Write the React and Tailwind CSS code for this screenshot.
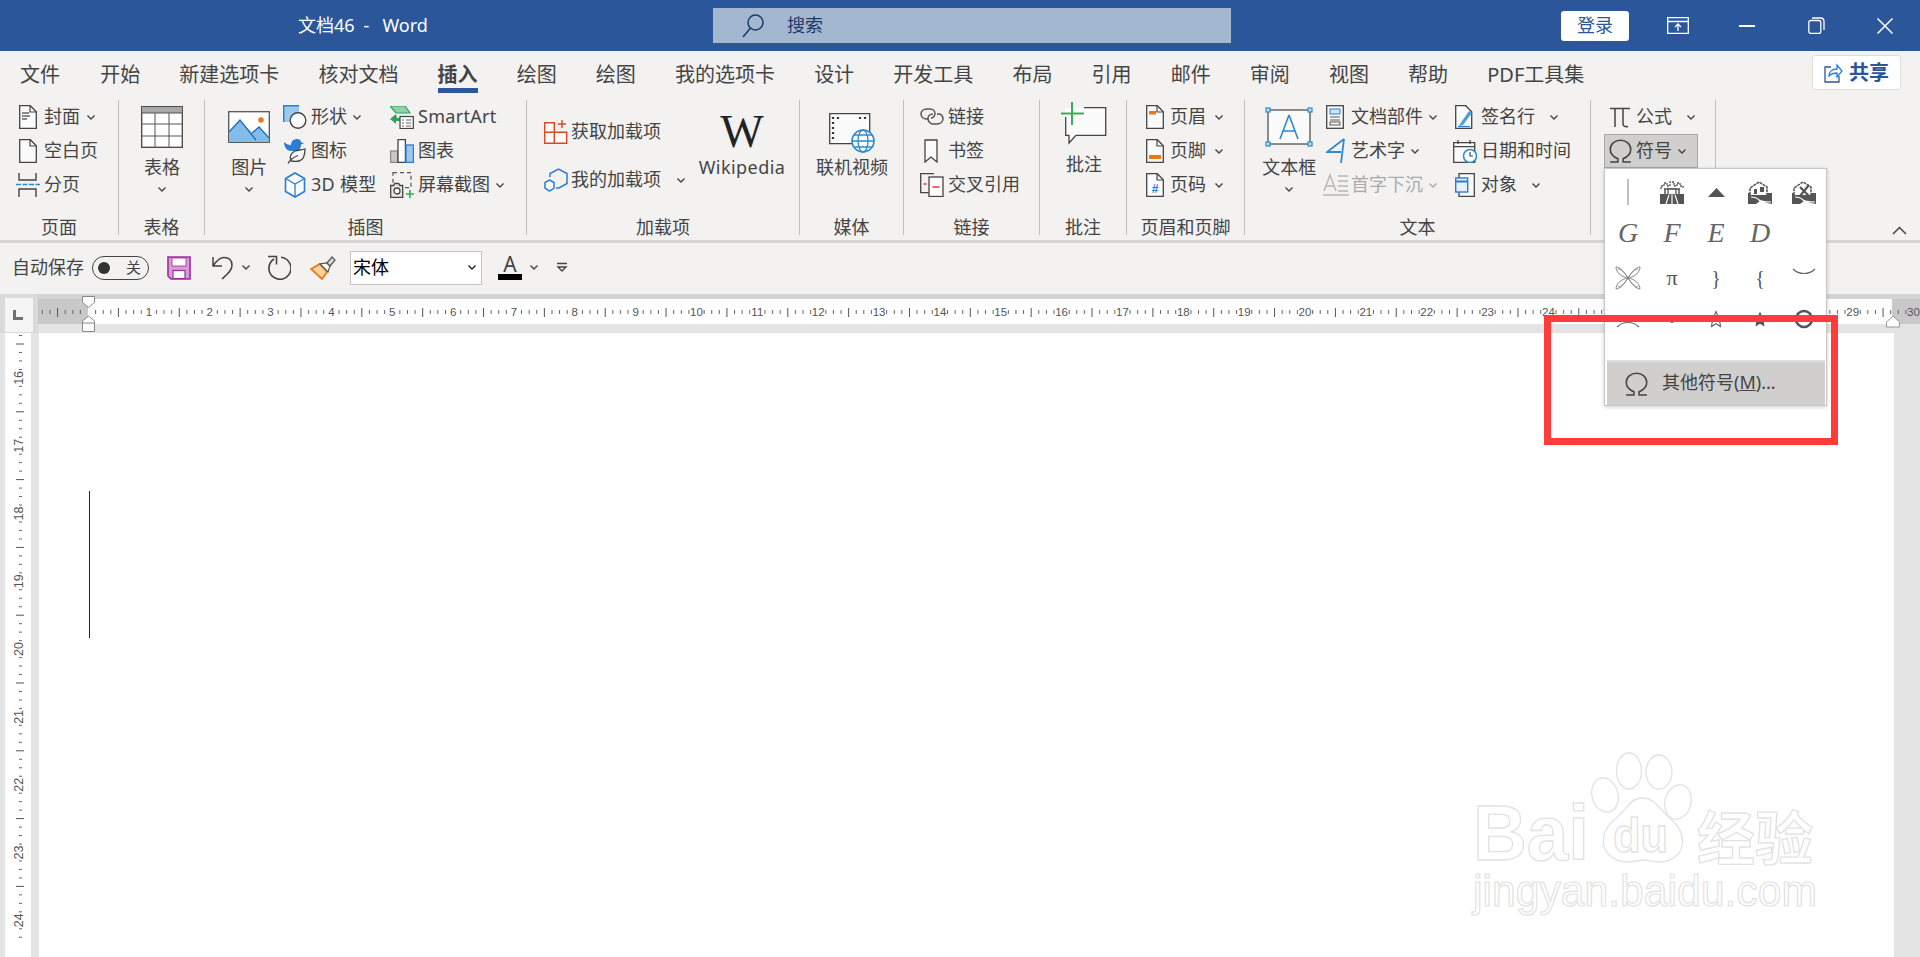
import React from "react";

const Chev = ({ c = "#444", className = "" }) => (
  <svg width="10" height="7" viewBox="0 0 10 7" className={"shrink-0 " + className}>
    <path d="M1.500 1.500 5 5l3.500-3.500" fill="none" stroke={c} strokeWidth="1.400" />
  </svg>
);
const Doc = ({ children, w = 18, h = 24 }) => (
  <svg width={w} height={h} viewBox="0 0 18 24">
    <path d="M.7.700h10.600l6 6v16.600H.7z" fill="#fbfbfb" stroke="#444" strokeWidth="1.300" />
    <path d="M11 .7v6.300h6.300" fill="none" stroke="#444" strokeWidth="1.200" />
    {children}
  </svg>
);
const ItemC = ({ icon, iw = 28, label, cm, cc, color = "", track = "" }) => (
  <div className={"flex items-center h-[34px] whitespace-nowrap " + color}>
    <div className="flex items-center shrink-0" style={{ width: iw }}>{icon}</div>
    <span className={"pb-[2px] " + track}>{label}</span>
    {cm !== undefined && <div className="flex" style={{ marginLeft: cm }}><Chev c={cc} /></div>}
  </div>
);
const Big = ({ icon, label, w = 60, chev, ic = "", track = "" }) => (
  <div className="flex flex-col items-center shrink-0" style={{ width: w }}>
    <div className={"h-[54px] flex items-center justify-center " + ic}>{icon}</div>
    <div className={"h-[26px] leading-[26px] whitespace-nowrap " + track}>{label}</div>
    {chev && <div className="h-[18px] flex items-center"><Chev /></div>}
  </div>
);
const Group = ({ w, label, children, pl = 0 }) => (
  <div className="flex flex-col h-[135px] border-r border-[#c0c0c0] shrink-0 relative" style={{ width: w }}>
    <div className="flex h-[102px]" style={{ paddingLeft: pl }}>{children}</div>
    {label && <div className="mt-auto mb-[1px] h-[14px] leading-[14px] text-center whitespace-nowrap">{label}</div>}
  </div>
);

const Ic = {
  cover: <Doc><path d="M3 8h7M3 11h8M3 14h5" stroke="#666" strokeWidth="1.300" /></Doc>,
  blank: <Doc />,
  brk: (
    <svg width="24" height="24" viewBox="0 0 24 24" className="-ml-[3px]">
      <path d="M3 0v7h17V0M3 24v-8h17v8" fill="none" stroke="#444" strokeWidth="1.400" />
      <path d="M0 11.500h24" stroke="#2b8ad3" strokeWidth="1.500" strokeDasharray="5 1.500" />
    </svg>
  ),
  table: (
    <svg width="42" height="42" viewBox="0 0 42 42">
      <rect x=".7" y=".7" width="40.600" height="40.600" fill="#fff" stroke="#444" strokeWidth="1.300" />
      <rect x="1" y="1" width="40" height="6" fill="#a8a8a8" />
      <path d="M14 7v34M28 7v34M1 7h40M1 18h40M1 30h40" stroke="#555" strokeWidth="1" fill="none" />
    </svg>
  ),
  pic: (
    <svg width="42" height="32" viewBox="0 0 42 32">
      <rect x=".7" y=".7" width="40.600" height="30.600" fill="#fff" stroke="#555" strokeWidth="1.300" />
      <path d="M1 31V21L12 9l12 13 7-6 10 11v4z" fill="#83bcea" />
      <path d="M1 21L12 9l16 20M24 22l7-6 10 11" fill="none" stroke="#1e6fb5" strokeWidth="1.300" />
      <circle cx="33" cy="9" r="2.800" fill="#e8791c" />
    </svg>
  ),
  shape: (
    <svg width="24" height="24" viewBox="0 0 24 24">
      <rect x=".7" y=".7" width="15.300" height="16.300" fill="#9cc8ee" />
      <path d="M.7 17V.7H16" fill="none" stroke="#2b7cd3" strokeWidth="1.400" />
      <circle cx="15" cy="15.500" r="7.800" fill="#fbfbfb" stroke="#444" strokeWidth="1.400" />
    </svg>
  ),
  icons: (
    <svg width="24" height="26" viewBox="0 0 24 26" className="-mt-[1px]">
      <path d="M1 4c2 2 4 3 7 3 0-4 3-6 6-6 2 0 4 1 4 3l3 1.500-3 1c0 3-1 5-3 6.500H8C4 13 1 9 1 4z" fill="#2b7cd3" />
      <path d="M8 23c-2-4 0-8 4-10 3-1 7-1 10-2 0 7-2 11-6 12-2 .5-5 .500-8 0zM5 25.500c2-4 5-6 10-8" fill="#fbfbfb" stroke="#444" strokeWidth="1.300" />
    </svg>
  ),
  cube: (
    <svg width="22" height="26" viewBox="0 0 22 26" className="ml-[1px]">
      <path d="M11 1l9.500 5.500v13L11 25 1.500 19.500v-13z" fill="#fbfbfb" stroke="#2b7cd3" strokeWidth="1.600" />
      <path d="M1.500 6.500L11 12l9.500-5.500M11 12v13" fill="none" stroke="#2b7cd3" strokeWidth="1.300" />
    </svg>
  ),
  smart: (
    <svg width="24" height="23" viewBox="0 0 24 23">
      <path d="M0 0h15l5 7H6z" fill="#8fd1a6" stroke="#2ea55a" strokeWidth="1.200" />
      <path d="M0 13l6-5 1 4h6v3H6v3z" fill="#2ea55a" />
      <rect x="10" y="10.500" width="13.300" height="12" fill="#fbfbfb" stroke="#444" strokeWidth="1.200" />
      <path d="M12 14h2M16 14h5M12 17h2M16 17h5M12 20h2M16 20h5" stroke="#666" />
    </svg>
  ),
  chart: (
    <svg width="24" height="24" viewBox="0 0 24 24">
      <rect x=".6" y="12" width="7" height="11.400" fill="#c8c8c8" stroke="#888" strokeWidth="1.200" />
      <rect x="8" y=".6" width="7.400" height="22.800" fill="#fff" stroke="#444" strokeWidth="1.300" />
      <rect x="16" y="6" width="7.400" height="17.400" fill="#9cc8ee" stroke="#2b7cd3" strokeWidth="1.300" />
    </svg>
  ),
  shot: (
    <svg width="24" height="26" viewBox="0 0 24 26">
      <rect x="3" y=".7" width="18" height="15" fill="none" stroke="#555" strokeWidth="1.200" strokeDasharray="4 3" />
      <path d="M.7 13.500h3l1-2h4l1 2h3v11.800H.7z" fill="#e8e8e8" stroke="#444" strokeWidth="1.300" />
      <circle cx="7" cy="19" r="3" fill="#fff" stroke="#444" strokeWidth="1.300" />
      <path d="M20 18v8M16 22h8" stroke="#34a853" strokeWidth="1.600" />
    </svg>
  ),
  get: (
    <svg width="24" height="24" viewBox="0 0 24 24">
      <path d="M.7 2.700h9.600v9.600H.7zM.7 12.300h9.600v11H.7zM10.300 12.300h12.400v11H10.300z" fill="#fbfbfb" stroke="#d8491f" strokeWidth="1.400" />
      <path d="M18 0v8M14 4h8" stroke="#d8491f" strokeWidth="1.400" />
    </svg>
  ),
  mine: (
    <svg width="24" height="24" viewBox="0 0 24 24">
      <path d="M6 9V5.500L14.500 1 23 5.500v10L15 20h-3" fill="none" stroke="#2b7cd3" strokeWidth="1.500" />
      <path d="M5.500 12l4.500 2.500v5.500L5.500 23 1 20v-5.500z" fill="#fbfbfb" stroke="#2b7cd3" strokeWidth="1.500" />
    </svg>
  ),
  video: (
    <svg width="46" height="40" viewBox="0 0 46 40">
      <path d="M.7.700h40v30H.7z" fill="#fbfbfb" stroke="#444" strokeWidth="1.300" />
      <path d="M4 4v2M4 9v2M4 14v2M4 19v2M4 24v2M9 4v2M31 4v2M36 4v2" stroke="#333" strokeWidth="2.200" />
      <circle cx="34" cy="28" r="11" fill="#fff" stroke="#2b8ad3" strokeWidth="1.600" />
      <ellipse cx="34" cy="28" rx="5" ry="11" fill="none" stroke="#2b8ad3" strokeWidth="1.300" />
      <path d="M23 28h22M25 22h18M25 34h18" stroke="#2b8ad3" strokeWidth="1.300" />
    </svg>
  ),
  link: (
    <svg width="24" height="18" viewBox="0 0 24 18">
      <path d="M8 11H7C3 11 1 8.500 1 6s2-5 6-5h3c3 0 5 2 5 4.500S13 10 11 10" fill="none" stroke="#555" strokeWidth="1.500" />
      <path d="M13 5c-3 0-5 2-5 4.500S10 15 13 15h3c4 0 7-2 7-5s-2-5-5-5h-1" fill="none" stroke="#555" strokeWidth="1.500" transform="translate(0 1)" />
    </svg>
  ),
  mark: (
    <svg width="14" height="24" viewBox="0 0 14 24" className="ml-[4px]">
      <path d="M1 1h12v22l-6-5-6 5z" fill="#fbfbfb" stroke="#444" strokeWidth="1.300" />
    </svg>
  ),
  xref: (
    <svg width="24" height="24" viewBox="0 0 24 24">
      <path d="M14 .7H.7v19h8" fill="none" stroke="#444" strokeWidth="1.300" />
      <rect x="9" y="4" width="14" height="19.500" fill="#fbfbfb" stroke="#444" strokeWidth="1.300" />
      <path d="M3.500 11h3M12.500 14h7" stroke="#e33" strokeWidth="1.600" />
    </svg>
  ),
  comment: (
    <svg width="46" height="44" viewBox="0 0 46 44">
      <path d="M4.700 5.700h40v27.600H15L8 41v-7.700H4.700z" fill="#fbfbfb" />
      <path d="M23 5.700h21.700v27.600H15L8 41v-7.700H4.700V15" fill="none" stroke="#444" strokeWidth="1.300" />
      <path d="M11 0v23M0 11.500h23" stroke="#3eaa5e" strokeWidth="2" />
    </svg>
  ),
  hd: <Doc><rect x="3" y="6" width="7" height="3.500" fill="#e8791c" /></Doc>,
  ft: <Doc><rect x="3" y="16" width="12" height="4" fill="#e8791c" /></Doc>,
  pg: <Doc><text x="9" y="20" textAnchor="middle" fontSize="12" fontWeight="700" fontFamily="Liberation Sans" fill="#2b7cd3">#</text></Doc>,
  tbox: (
    <svg width="48" height="40" viewBox="0 0 48 40">
      <rect x="3" y="3" width="42" height="34" fill="#fbfbfb" stroke="#444" strokeWidth="1.200" />
      <path d="M24 8l-9 24M24 8l9 24M18 24h12" stroke="#2b8ad3" strokeWidth="1.600" fill="none" />
      {[[3, 3], [45, 3], [3, 37], [45, 37]].map(([x, y]) => (
        <rect key={x + "-" + y} x={x - 2} y={y - 2} width="4" height="4" fill="#bfe0f7" stroke="#2b8ad3" strokeWidth="1.200" />
      ))}
    </svg>
  ),
  parts: (
    <svg width="18" height="24" viewBox="0 0 18 24" className="ml-[3px]">
      <rect x=".7" y=".7" width="16.600" height="22.600" fill="#fbfbfb" stroke="#444" strokeWidth="1.300" />
      <rect x="4" y="4" width="10" height="5" fill="#cfe4f7" stroke="#2b7cd3" />
      <path d="M4 12h10M4 15h10" stroke="#555" strokeWidth="1.200" />
      <rect x="4" y="17" width="10" height="3" fill="none" stroke="#555" />
    </svg>
  ),
  wa: (
    <svg width="20" height="26" viewBox="0 0 20 26" className="ml-[3px]">
      <path d="M18 1L1 14h14M18 1l-3 24" fill="none" stroke="#2b8ad3" strokeWidth="1.800" />
    </svg>
  ),
  drop: (
    <svg width="26" height="24" viewBox="0 0 26 24">
      <path d="M1 18L7 2l6 16M3 13h8M0 22h26M15 3h10M15 8h10M15 13h10M15 18h10" fill="none" stroke="#b5b5b5" strokeWidth="1.400" />
    </svg>
  ),
  sign: (
    <svg width="19" height="24" viewBox="0 0 19 24">
      <path d="M.7.700h10l6 6v16.600H.7z" fill="#fbfbfb" stroke="#444" strokeWidth="1.300" />
      <path d="M5 19L14 6l3 2-9 12-4 1z" fill="#4a9fe0" />
      <path d="M3 21.500h12" stroke="#2b7cd3" strokeWidth="1.200" />
    </svg>
  ),
  date: (
    <svg width="24" height="24" viewBox="0 0 24 24" className="-ml-[2px]">
      <path d="M.7 3.700h21v19.600H.7z" fill="#fbfbfb" stroke="#444" strokeWidth="1.300" />
      <path d="M1 7.700h21M5 1v4M17 1v4" stroke="#444" strokeWidth="1.300" />
      <circle cx="17" cy="17" r="6.500" fill="#fff" stroke="#2b8ad3" strokeWidth="1.500" />
      <path d="M17 13v4h3" fill="none" stroke="#444" strokeWidth="1.200" />
    </svg>
  ),
  obj: (
    <svg width="20" height="24" viewBox="0 0 20 24">
      <path d="M4 .7h15.300v22.600H4z" fill="#fbfbfb" stroke="#444" strokeWidth="1.300" />
      <rect x=".7" y="5" width="12" height="14" fill="#e6f1fb" stroke="#2b7cd3" strokeWidth="1.400" />
      <path d="M1 8.500h11" stroke="#2b7cd3" strokeWidth="2" />
    </svg>
  ),
  pi: (
    <svg width="22" height="21" viewBox="0 0 22 21">
      <path d="M1 1.500h20M6 1.500V20M14 1.500V17c0 2 2 3 5 2.500" fill="none" stroke="#444" strokeWidth="1.500" />
    </svg>
  ),
};
const Omega = () => (
  <svg width="23" height="24" viewBox="0 0 22 23">
    <path d="M1 22h7.500v-3C4 17 1.200 14 1.200 10 1.200 5 5.500 1.200 11 1.200S20.800 5 20.800 10c0 4-2.800 7-7.300 9v3H21" fill="none" stroke="#444" strokeWidth="1.500" />
  </svg>
);

const tabs = ["文件", "开始", "新建选项卡", "核对文档", "插入", "绘图", "绘图", "我的选项卡", "设计", "开发工具", "布局", "引用", "邮件", "审阅", "视图", "帮助", "PDF工具集"];

const cm = 60.85;
const HRuler = () => {
  const t = [];
  for (let i = -7; i <= 244; i++) {
    const x = 50 + (i * cm) / 8;
    if (x < 2 || x > 1880) continue;
    const m = ((i % 8) + 8) % 8;
    if (m === 0) {
      if (i !== 0) t.push(<text key={i} x={x} y="18" textAnchor="middle" dominantBaseline="central" fontSize="11.500" fontFamily="Liberation Sans" fill="#555">{i / 8}</text>);
    } else if (m === 4) {
      t.push(<path key={i} d={`M${x} 14v9`} stroke="#555" strokeWidth="1" />);
    } else {
      t.push(<path key={i} d={`M${x} 16v4`} stroke="#666" strokeWidth="1" />);
    }
  }
  return (
    <svg width="1882" height="39" viewBox="0 0 1882 39" className="absolute left-0 top-0">
      {t}
      <path d="M44.500 2.500h12v6l-6 5-6-5z" fill="#fff" stroke="#888" />
      <path d="M50.500 22l6 5v10.500h-12V27z" fill="#fff" stroke="#888" />
      <path d="M44.500 29h12" stroke="#888" />
      <path d="M1855 22l6.500 6v5h-13v-5z" fill="#fff" stroke="#999" />
    </svg>
  );
};
const VRuler = () => {
  const t = [];
  for (let i = -1; i < 72; i++) {
    const y = 11 + (i * 67.8) / 8;
    if (y > 612) continue;
    const m = ((i % 8) + 8) % 8;
    if (m === 4) {
      const c = 16 + (i - 4) / 8;
      t.push(<text key={i} x="14" y={y} textAnchor="middle" dominantBaseline="central" fontSize="12.500" fontFamily="Liberation Sans" fill="#555" transform={`rotate(-90 14 ${y})`}>{c}</text>);
    } else if (m === 0) {
      t.push(<path key={i} d={`M11 ${y}h8`} stroke="#555" strokeWidth="1" />);
    } else {
      t.push(<path key={i} d={`M14 ${y}h3`} stroke="#666" strokeWidth="1" />);
    }
  }
  return (
    <svg width="26" height="624" viewBox="0 0 26 624" className="absolute left-0 top-0">{t}</svg>
  );
};

const Castle = () => (
  <svg width="24" height="23" viewBox="0 0 24 23">
    <path d="M0 13h24v10H0z" fill="#555" />
    <path d="M1 8V5h3V2h3v3h3V1h4v4h3V2h3v3h3v3" fill="none" stroke="#555" strokeWidth="1.300" strokeDasharray="2 1" />
    <path d="M4 8h16M5 8v6M19 8v6" stroke="#555" strokeWidth="1.500" fill="none" />
    <path d="M8 8h8v6H8z" fill="#fff" stroke="#555" strokeWidth="1.300" />
    <path d="M9 14L6 23M15 14l3 9M12 14v9" stroke="#fff" strokeWidth="1.200" />
  </svg>
);
const House = ({ cross }) => (
  <svg width="24" height="23" viewBox="0 0 24 23">
    <path d="M2 14V7l9-6 8 5v8" fill="#fff" stroke="#555" strokeWidth="1.500" strokeDasharray="3 .7" />
    <path d="M0 23V12h2v2h17v-2h5v11l-5-1-7-2-4 3z" fill="#555" />
    <path d="M3 16c3 0 6 1 8 3s6 2 12 2" fill="none" stroke="#fff" strokeWidth="1.200" />
    {cross ? <path d="M8 6l9 9M17 4L8 15" stroke="#555" strokeWidth="2.200" /> : <path d="M6 8h3v5H6zM12 6h4v5h-4z" fill="#555" />}
  </svg>
);
const Sym = ({ children, cls = "" }) => (
  <div className={"w-[44px] h-full flex items-center justify-center leading-none overflow-visible " + cls}>{children}</div>
);
const Script = ({ c }) => (
  <span className="[font-family:'Liberation_Serif',serif] italic text-[28px] text-[#666]">{c}</span>
);
const Star = ({ fill }) => (
  <svg width="18" height="18" viewBox="0 0 24 24" className="-mt-[6px]">
    <path d="M12 2l3 7 7 .8-5.200 4.800L18 22l-6-3.800L6 22l1.200-7.400L2 9.800 9 9z" fill={fill ? "#555" : "none"} stroke={fill ? "none" : "#666"} strokeWidth="1.500" />
  </svg>
);

export default function App() {
  return (
    <div className="relative w-[1920px] h-[957px] overflow-hidden flex flex-col bg-white text-[18px] text-[#444] [font-family:'Noto_Sans','Noto_Sans_CJK_SC',sans-serif]">
      {/* Title bar */}
      <div className="h-[51px] bg-[#2b579a] flex items-center shrink-0">
        <div className="w-[713px] pl-[298px] text-white whitespace-nowrap text-[18px] flex">
          <span>文档46</span>
          <span className="ml-[9px]">-</span>
          <span className="ml-[13px]">Word</span>
        </div>
        <div className="w-[518px] h-[35px] bg-[#a4b7d0] flex items-center pl-[29px] text-[#1d3a6b]">
          <svg width="22" height="24" viewBox="0 0 22 24">
            <circle cx="13.500" cy="8.500" r="7.500" fill="none" stroke="#1d3a6b" strokeWidth="1.500" />
            <path d="M8.500 14L1 23" stroke="#1d3a6b" strokeWidth="1.600" />
          </svg>
          <span className="ml-[23px]">搜索</span>
        </div>
        <div className="ml-[330px] w-[68px] h-[30px] bg-white rounded-[3px] flex items-center justify-center text-[#2b579a]">登录</div>
        <svg width="22" height="17" viewBox="0 0 22 17" className="ml-[38px]">
          <path d="M.7.700h20.600v15.600H.7zM1 4.500h20M11 14V7M8 10l3-3 3 3" fill="none" stroke="#fff" strokeWidth="1.300" />
        </svg>
        <div className="ml-[50px] w-[16px] h-[2px] bg-white" />
        <svg width="17" height="17" viewBox="0 0 17 17" className="ml-[53px]">
          <rect x=".8" y="3.500" width="12" height="13" rx="2" fill="none" stroke="#fff" strokeWidth="1.300" />
          <path d="M4 1h8.500c2 0 3.500 1.500 3.500 3.500V13" fill="none" stroke="#fff" strokeWidth="1.300" />
        </svg>
        <svg width="16" height="16" viewBox="0 0 16 16" className="ml-[52px]">
          <path d="M.5.500l15 15M15.500.500l-15 15" stroke="#fff" strokeWidth="1.500" />
        </svg>
      </div>

      {/* Tabs */}
      <div className="h-[49px] bg-[#f3f2f1] shrink-0 flex items-start pl-[20px] gap-[39.150px] text-[20px] relative">
        {tabs.map((t, i) => (
          <div key={i} className={"h-[42px] pt-[8.500px] leading-[30px] whitespace-nowrap border-b-[5px] " + (i === 4 ? "border-[#2b579a] font-bold" : i === 0 ? "border-transparent mr-[1px]" : "border-transparent")}>{t}</div>
        ))}
        <div className="ml-auto mr-[19px] mt-[4px] w-[89px] h-[35px] bg-white border border-[#e1dfdd] rounded-[3px] flex items-center pl-[11px] text-[#2b579a] font-bold">
          <svg width="19" height="20" viewBox="0 0 19 20" className="mr-[6px]">
            <path d="M7 4H1v15h14v-6" fill="none" stroke="#2b579a" strokeWidth="1.300" />
            <path d="M5 13c0-4 3-7 8-7V2l5 6-5 6v-4c-3 0-6 1-8 3z" fill="none" stroke="#2b7cd3" strokeWidth="1.300" />
          </svg>
          共享
        </div>
      </div>

      {/* Ribbon */}
      <div className="h-[143px] bg-[#f3f2f1] shrink-0 flex items-start border-b-[3px] border-[#d6d6d6]">
        <Group w={119} label="页面" pl={19}>
          <div>
            <ItemC iw={25} icon={Ic.cover} label="封面" cm={6} />
            <ItemC iw={25} icon={Ic.blank} label="空白页" />
            <ItemC iw={25} icon={Ic.brk} label="分页" />
          </div>
        </Group>
        <Group w={86} label="表格" pl={12}>
          <Big w={62} icon={Ic.table} label="表格" chev />
        </Group>
        <Group w={322} label="插图" pl={10.500}>
          <Big w={67.500} icon={Ic.pic} label="图片" chev />
          <div className="w-[107px]">
            <ItemC icon={Ic.shape} label="形状" cm={5} />
            <ItemC icon={Ic.icons} label="图标" />
            <ItemC icon={Ic.cube} label="3D 模型" track="tracking-[0.3px]" />
          </div>
          <div>
            <ItemC icon={Ic.smart} label="SmartArt" track="tracking-[0.3px]" />
            <ItemC icon={Ic.chart} label="图表" />
            <ItemC icon={Ic.shot} label="屏幕截图" cm={5} />
          </div>
        </Group>
        <Group w={273} label="加载项" pl={17}>
          <div className="w-[153px] pt-[15px] flex flex-col gap-[14px]">
            <ItemC iw={27} icon={Ic.get} label="获取加载项" />
            <ItemC iw={27} icon={Ic.mine} label="我的加载项" cm={15} />
          </div>
          <Big w={90} ic="pt-[10px]" track="tracking-[0.45px]" icon={<span className="[font-family:'Liberation_Serif',serif] text-[46px] leading-none text-[#222]">W</span>} label="Wikipedia" />
        </Group>
        <Group w={104} label="媒体" pl={16}>
          <Big w={72} ic="pt-[12px]" icon={Ic.video} label="联机视频" />
        </Group>
        <Group w={136} label="链接" pl={16}>
          <div>
            <ItemC icon={Ic.link} label="链接" />
            <ItemC icon={Ic.mark} label="书签" />
            <ItemC icon={Ic.xref} label="交叉引用" />
          </div>
        </Group>
        <Group w={87} label="批注" pl={14}>
          <Big w={60} ic="-mt-[3px]" icon={Ic.comment} label="批注" />
        </Group>
        <Group w={118} label="页眉和页脚" pl={19}>
          <div>
            <ItemC iw={24} icon={Ic.hd} label="页眉" cm={8} />
            <ItemC iw={24} icon={Ic.ft} label="页脚" cm={8} />
            <ItemC iw={24} icon={Ic.pg} label="页码" cm={8} />
          </div>
        </Group>
        <Group w={346} label="文本" pl={10.500}>
          <Big w={67.500} icon={Ic.tbox} label="文本框" chev />
          <div className="w-[132px]">
            <ItemC icon={Ic.parts} label="文档部件" cm={5} />
            <ItemC icon={Ic.wa} label="艺术字" cm={5} />
            <ItemC icon={Ic.drop} label="首字下沉" cm={5} cc="#aaa" color="text-[#aaa]" />
          </div>
          <div>
            <ItemC iw={26} icon={Ic.sign} label="签名行" cm={14} />
            <ItemC iw={26} icon={Ic.date} label="日期和时间" />
            <ItemC iw={26} icon={Ic.obj} label="对象" cm={14} />
          </div>
        </Group>
        <Group w={125} pl={13}>
          <div>
            <div className="pl-[5px]"><ItemC iw={27} icon={Ic.pi} label="公式" cm={14} /></div>
            <div className="w-[94px] h-[34px] bg-[#d0cfcd] border border-[#a8a8a8] pl-[4px] flex items-center">
              <div className="w-[27px] flex items-center"><Omega /></div>
              <span className="pb-[2px]">符号</span>
              <div className="ml-[5px] flex"><Chev /></div>
            </div>
          </div>
        </Group>
        <div className="flex-1 h-[135px] flex items-end justify-end pr-[13px]">
          <svg width="15" height="9" viewBox="0 0 15 9">
            <path d="M1 8l6.500-6.500L14 8" fill="none" stroke="#444" strokeWidth="1.500" />
          </svg>
        </div>
      </div>

      {/* Quick access */}
      <div className="h-[51px] bg-[#f3f2f1] shrink-0 flex items-center pl-[12px] pb-[2px] whitespace-nowrap">
        <span>自动保存</span>
        <div className="ml-[8px] w-[57px] h-[24px] border border-[#444] rounded-full flex items-center pl-[5px]">
          <div className="w-[12px] h-[12px] rounded-full bg-[#333]" />
          <span className="ml-[16px] text-[15px]">关</span>
        </div>
        <svg width="24" height="24" viewBox="0 0 24 24" className="ml-[18px]">
          <path d="M1 1h22v22H4l-3-3z" fill="#dc98dc" stroke="#9c2e9c" strokeWidth="1.600" />
          <rect x="5" y="2" width="14" height="8" fill="#fff" stroke="#9c2e9c" strokeWidth=".8" />
          <rect x="6" y="14.500" width="12" height="8" fill="#fff" stroke="#9c2e9c" strokeWidth="1.200" />
        </svg>
        <svg width="22" height="24" viewBox="0 0 22 24" className="ml-[20px]">
          <path d="M2 1v9h9M2 10C6 4 9 1.500 13 1.500c5 0 8 3 8 8 0 5-5 9-10 13.500" fill="none" stroke="#444" strokeWidth="1.500" />
        </svg>
        <Chev className="ml-[8px]" />
        <svg width="25" height="25" viewBox="0 0 25 25" className="ml-[15px]">
          <path d="M15 2.300A11 11 0 1 1 8 4" fill="none" stroke="#444" strokeWidth="1.600" />
          <path d="M2 1.500h8.500v8" fill="none" stroke="#444" strokeWidth="1.600" />
        </svg>
        <svg width="26" height="24" viewBox="0 0 26 24" className="ml-[19px]">
          <path d="M1 13l9-5 7 8-5 7z" fill="#fbd39b" stroke="#e8791c" strokeWidth="1.800" />
          <path d="M10 8l8 8 2-6-3-3z" fill="#fff" stroke="#555" strokeWidth="1.200" />
          <path d="M17 7l5-6 3 3-5 6z" fill="#ddd" stroke="#555" strokeWidth="1.200" />
        </svg>
        <div className="ml-[14px] w-[132px] h-[34px] bg-white border border-[#c4c4c4] flex items-center pl-[2px] pr-[4px] justify-between">
          <span className="text-black">宋体</span>
          <Chev c="#222" />
        </div>
        <div className="ml-[16px] w-[24px] flex flex-col items-center">
          <span className="h-[19px] leading-[19px] text-[21px]">A</span>
          <div className="w-[24px] h-[6px] bg-black" />
        </div>
        <Chev className="ml-[7px]" />
        <svg width="12" height="11" viewBox="0 0 12 11" className="ml-[17px]">
          <path d="M1 1.500h10M2 5h8l-4 4z" fill="none" stroke="#444" strokeWidth="1.400" />
        </svg>
      </div>

      {/* Ruler */}
      <div className="h-[39px] shrink-0 flex bg-[#e4e4e4]">
        <div className="w-[38px] h-[39px] bg-[#dadada] pl-[5px] pt-[4px]">
          <div className="w-[28px] h-[34px] bg-[#f5f5f5] flex items-end pb-[12px] pl-[8px]">
            <svg width="10" height="10" viewBox="0 0 10 10"><path d="M0 0h3v7h7v3H0z" fill="#707070" /></svg>
          </div>
        </div>
        <div className="flex-1 relative flex flex-col">
          <div className="h-[5px] bg-[#d4d4d4]" />
          <div className="h-[25px] flex">
            <div className="w-[50px] bg-[#c8c8c8]" />
            <div className="flex-1 bg-white" />
            <div className="w-[28px] bg-[#c8c8c8]" />
          </div>
          <HRuler />
        </div>
      </div>

      {/* Document */}
      <div className="flex-1 flex min-h-0">
        <div className="w-[39px] bg-[#e4e4e4] pl-[5px]">
          <div className="relative w-[26px] h-full bg-white"><VRuler /></div>
        </div>
        <div className="flex-1 bg-white pl-[50px] pt-[158px]">
          <div className="w-[1px] h-[147px] bg-[#222]" />
        </div>
        <div className="w-[26px] bg-[#e4e4e4]" />
      </div>

      {/* Symbol gallery */}
      <div className="absolute left-[1604px] top-[168px] w-[223px] h-[238px] bg-white border border-[#c6c6c6] shadow-[0_1px_4px_rgba(0,0,0,0.2)] pl-[1px] pt-[1px] flex flex-col">
        <div className="grid grid-cols-[repeat(5,44px)] grid-rows-[44px_38px_52px_36px] h-[189px] overflow-hidden content-start">
          <Sym><div className="w-[1.500px] h-[26px] bg-[#c0c0c0]" /></Sym>
          <Sym><Castle /></Sym>
          <Sym><svg width="17" height="9" viewBox="0 0 17 9"><path d="M8.500 0L17 9H0z" fill="#555" /></svg></Sym>
          <Sym><House /></Sym>
          <Sym><House cross /></Sym>

          <Sym><Script c="G" /></Sym>
          <Sym><Script c="F" /></Sym>
          <Sym><Script c="E" /></Sym>
          <Sym><Script c="D" /></Sym>
          <Sym />

          <Sym>
            <svg width="26" height="24" viewBox="0 0 26 24">
              <g fill="none" stroke="#888" strokeWidth="1">
                <path d="M13 12C8 4 4 1 1 1c0 5 5 10 12 11zM13 12c5-8 9-11 12-11 0 5-5 10-12 11zM13 12C8 20 4 23 1 23c0-5 5-10 12-11zM13 12c5 8 9 11 12 11 0-5-5-10-12-11z" />
                <path d="M13 12C9 6 6 3 3 3M13 12c4-6 7-9 10-9M13 12c-4 6-7 9-10 9M13 12c4 6 7 9 10 9" />
              </g>
            </svg>
          </Sym>
          <Sym><span className="[font-family:'Liberation_Serif',serif] text-[22px] text-[#555]">π</span></Sym>
          <Sym><span className="[font-family:'Liberation_Serif',serif] text-[20px] text-[#555]">{"}"}</span></Sym>
          <Sym><span className="[font-family:'Liberation_Serif',serif] text-[20px] text-[#555]">{"{"}</span></Sym>
          <Sym><svg width="24" height="8" viewBox="0 0 24 8" className="-mt-[12px]"><path d="M1 1c6 6 16 6 22 0" fill="none" stroke="#666" strokeWidth="1.200" /></svg></Sym>

          <Sym><svg width="24" height="8" viewBox="0 0 24 8" className="mt-[4px]"><path d="M1 7c6-6 16-6 22 0" fill="none" stroke="#666" strokeWidth="1.200" /></svg></Sym>
          <Sym><span className="w-[4px] h-[4px] bg-[#555] rounded-full -mt-[2px]" /></Sym>
          <Sym><Star /></Sym>
          <Sym><Star fill /></Sym>
          <Sym><svg width="20" height="20" viewBox="0 0 20 20" className="-mt-[6px]"><circle cx="10" cy="10" r="8" fill="none" stroke="#555" strokeWidth="2.600" /></svg></Sym>
        </div>
        <div className="h-[2px] bg-[#e0e0e0] mx-[1px] mt-[1px] shrink-0" />
        <div className="h-[43px] mx-[1px] bg-[#d0cfcd] flex items-center pl-[18px] whitespace-nowrap shrink-0">
          <Omega />
          <span className="ml-[14px] pb-[2px]">其他符号(<span className="underline">M</span>)...</span>
        </div>
      </div>

      {/* Annotation */}
      <div className="absolute left-[1544px] top-[315px] w-[294px] h-[130px] border-[7px] border-[#ff3b3b]" />

      {/* Watermark */}
      <svg width="400" height="190" viewBox="0 0 400 190" className="absolute left-[1465px] top-[750px]">
        <g fill="#fff" stroke="#e2e2e2" strokeWidth="1.300">
          <ellipse cx="164" cy="21" rx="12.500" ry="18" />
          <ellipse cx="194" cy="22" rx="13" ry="17" />
          <ellipse cx="140" cy="45" rx="13" ry="17.500" transform="rotate(-15 140 45)" />
          <ellipse cx="213" cy="52" rx="13" ry="17.500" transform="rotate(15 213 52)" />
          <path transform="translate(-8.500 0)" d="M186 48c-12 0-15 10-24 18-10 8-15 15-15 25 0 14 12 21 25 21 6 0 10-2 15-2s9 2 15 2c13 0 24-7 24-21 0-10-6-18-15-25-9-8-13-18-25-18z" />
          <text x="8" y="110" fontFamily="Liberation Sans" fontWeight="700" fontSize="78" textLength="116" lengthAdjust="spacingAndGlyphs">Bai</text>
          <text x="148" y="102" fontFamily="Liberation Sans" fontWeight="700" fontSize="48" textLength="55" lengthAdjust="spacingAndGlyphs">du</text>
          <text x="232" y="110" fontFamily="Noto Sans CJK SC" fontWeight="700" fontSize="58">经验</text>
          <text x="8" y="156" strokeWidth="1.200" fontFamily="Liberation Sans" fontSize="44" textLength="344" lengthAdjust="spacingAndGlyphs">jingyan.baidu.com</text>
        </g>
      </svg>
    </div>
  );
}
